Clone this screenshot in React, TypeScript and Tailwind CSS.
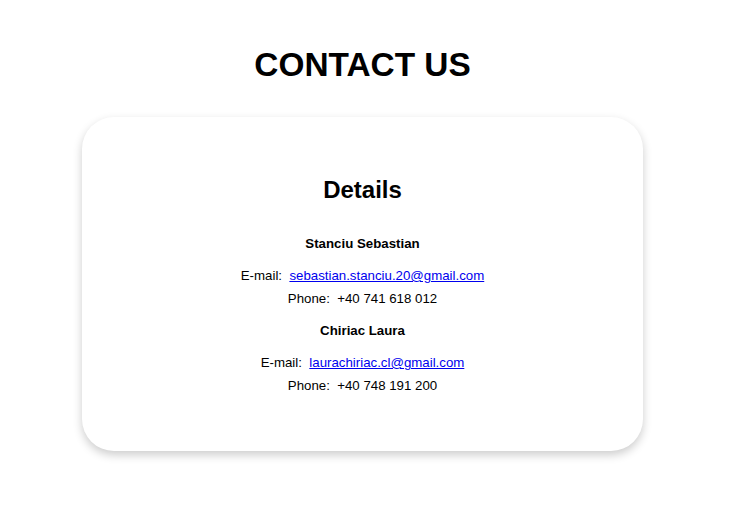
export default function App() {
  const people = [
    { name: "Stanciu Sebastian", email: "sebastian.stanciu.20@gmail.com", phone: "+40 741 618 012" },
    { name: "Chiriac Laura", email: "laurachiriac.cl@gmail.com", phone: "+40 748 191 200" },
  ];
  return (
    <div className="min-h-[531px] bg-white text-black" style={{ fontFamily: '"Liberation Sans", Arial, sans-serif' }}>
      <div className="w-[725px] pt-[46px] flex flex-col items-center">
        <h1 className="text-[33.4px] leading-[38px] font-bold">CONTACT US</h1>
        <div className="mt-[33px] w-[561px] rounded-[32px] bg-white shadow-[0_4px_10px_rgba(0,0,0,0.2)] pt-[59px] pb-[54px] flex flex-col items-center">
          <h2 className="text-[24px] leading-[28px] font-bold">Details</h2>
          <div className="mt-[28px] flex flex-col items-center text-[13.28px]">
            {people.map((p) => (
              <div key={p.name} className="flex flex-col items-center mb-[9px] last:mb-0">
                <div className="font-bold leading-[23px]">{p.name}</div>
                <div className="mt-[9px] leading-[23px] whitespace-pre">
                  {"E-mail:  "}
                  <a href={`mailto:${p.email}`} className="text-[#0000ee] underline">{p.email}</a>
                </div>
                <div className="leading-[23px] whitespace-pre">{"Phone:  " + p.phone}</div>
              </div>
            ))}
          </div>
        </div>
      </div>
    </div>
  );
}
